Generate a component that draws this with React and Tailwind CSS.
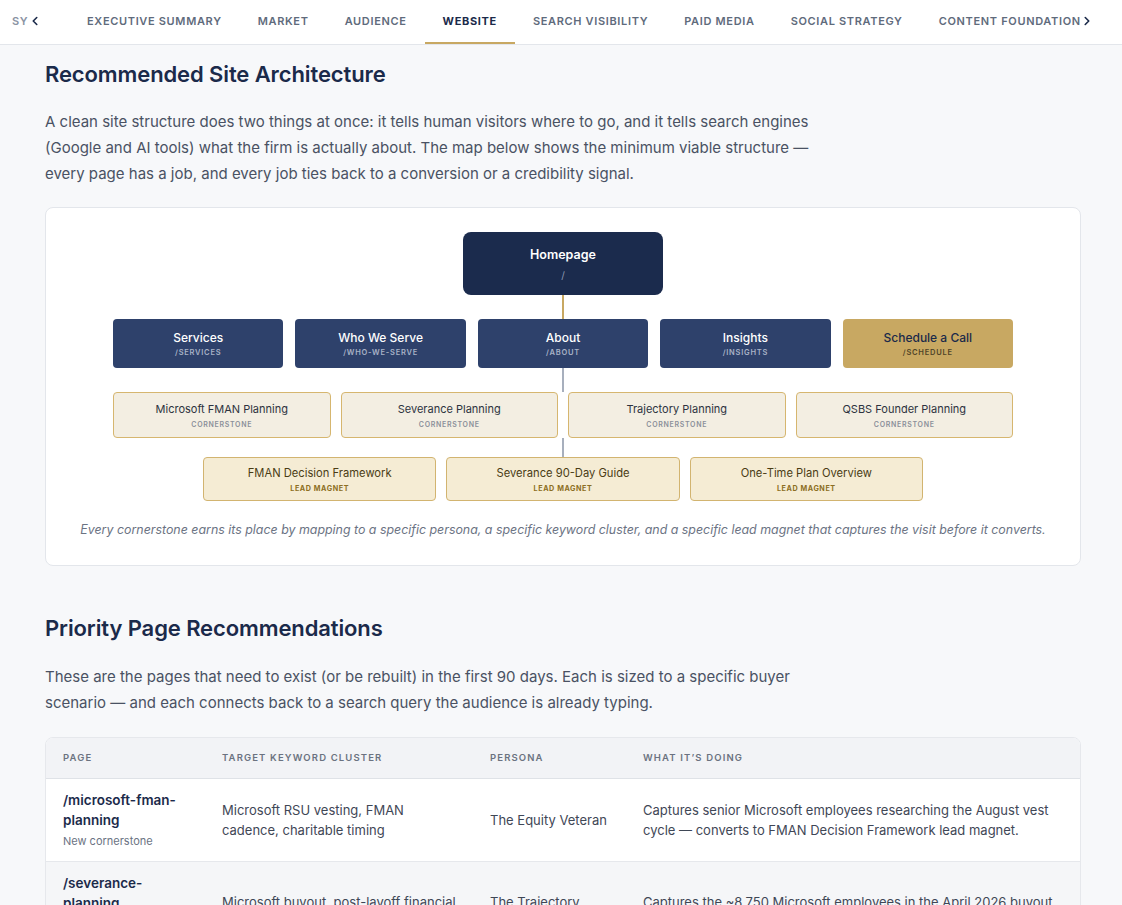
import React from "react";
import { ChevronLeft, ChevronRight } from "lucide-react";

const tabs = [
  "EXECUTIVE SUMMARY",
  "MARKET",
  "AUDIENCE",
  "WEBSITE",
  "SEARCH VISIBILITY",
  "PAID MEDIA",
  "SOCIAL STRATEGY",
  "CONTENT FOUNDATION",
];

const mainNav = [
  { t: "Services", s: "/SERVICES" },
  { t: "Who We Serve", s: "/WHO-WE-SERVE" },
  { t: "About", s: "/ABOUT" },
  { t: "Insights", s: "/INSIGHTS" },
];

const cornerstones = [
  "Microsoft FMAN Planning",
  "Severance Planning",
  "Trajectory Planning",
  "QSBS Founder Planning",
];

const magnets = [
  "FMAN Decision Framework",
  "Severance 90-Day Guide",
  "One-Time Plan Overview",
];

const rows = [
  {
    page: "/microsoft-fman-planning",
    note: "New cornerstone",
    kw: "Microsoft RSU vesting, FMAN cadence, charitable timing",
    persona: "The Equity Veteran",
    what: "Captures senior Microsoft employees researching the August vest cycle — converts to FMAN Decision Framework lead magnet.",
  },
  {
    page: "/severance-planning",
    note: "New cornerstone (time-sensitive)",
    kw: "Microsoft buyout, post-layoff financial planning, severance tax",
    persona: "The Trajectory Planner",
    what: "Captures the ~8,750 Microsoft employees in the April 2026 buyout window — converts to the Severance 90-Day Guide.",
  },
];

export default function App() {
  return (
    <div
      className="min-h-screen bg-[#f7f8fa] text-[#3f4756]"
      style={{ fontFamily: "Inter, 'Noto Sans', sans-serif" }}
    >
      {/* Tab bar */}
      <div className="relative h-[45px] bg-white border-b border-[#e3e6eb] overflow-hidden">
        <div className="flex h-full whitespace-nowrap pb-[2px]">
          <div className="-ml-[6px] w-[75px] shrink-0 h-full flex items-center pl-[18px] text-[11px] font-semibold tracking-[0.06em] text-[#8a93a3] overflow-hidden">
            SYSTEM
          </div>
          {tabs.map((t) => {
            const active = t === "WEBSITE";
            return (
              <div
                key={t}
                className={
                  "relative shrink-0 h-full flex items-center px-[18px] text-[11px] tracking-[0.06em] " +
                  (active
                    ? "font-bold text-[#1b2a4a]"
                    : "font-semibold text-[#5f6b7c]")
                }
              >
                {t}
                {active && (
                  <span className="absolute left-0 right-0 -bottom-[2px] h-[2px] bg-[#c8a862]" />
                )}
              </div>
            );
          })}
        </div>
        <div className="absolute left-[28px] top-0 h-full w-[40px] bg-white flex items-center pb-[2px]">
          <ChevronLeft size={14} strokeWidth={2.75} color="#1b2a4a" />
        </div>
        <div className="absolute left-[1080px] top-0 h-full w-[42px] bg-white flex items-center pb-[2px]">
          <ChevronRight size={14} strokeWidth={2.75} color="#1b2a4a" />
        </div>
      </div>

      <main className="ml-[45px] w-[1036px] pb-10">
        <h2 className="mt-[15px] text-[22px] leading-[28px] font-semibold tracking-[-0.005em] text-[#1b2a4a]">
          Recommended Site Architecture
        </h2>
        <p className="mt-[21px] max-w-[780px] text-[15px] leading-[26px] text-[#4a5263]">
          A clean site structure does two things at once: it tells human visitors where to go, and it tells search engines (Google and AI tools) what the firm is actually about. The map below shows the minimum viable structure — every page has a job, and every job ties back to a conversion or a credibility signal.
        </p>

        {/* Diagram card */}
        <div className="mt-[20px] bg-white border border-[#e3e6eb] rounded-lg pt-[24px] pb-[26px]">
          <div className="flex flex-col items-center">
            <div className="w-[200px] h-[63px] rounded-lg bg-[#1b2b4d] flex flex-col items-center justify-center gap-[6px]">
              <div className="text-[12.5px] leading-[16px] font-semibold text-white">Homepage</div>
              <div className="text-[10px] leading-[12px] text-[#8d99b3]">/</div>
            </div>
            <div className="w-[2px] h-[24px] bg-[#c8a862]" />
            <div className="w-[900px] grid grid-cols-5 gap-[12px]">
              {mainNav.map((n) => (
                <div
                  key={n.t}
                  className="h-[49px] rounded-[4px] bg-[#2e416b] flex flex-col items-center justify-center gap-[3px]"
                >
                  <div className="text-[12px] leading-[15px] font-medium text-white">{n.t}</div>
                  <div className="text-[7.5px] leading-[10px] font-semibold tracking-[0.1em] text-[#a9b3c7]">{n.s}</div>
                </div>
              ))}
              <div className="h-[49px] rounded-[4px] bg-[#c8a862] flex flex-col items-center justify-center gap-[3px]">
                <div className="text-[12px] leading-[15px] font-medium text-[#1b2a4a]">Schedule a Call</div>
                <div className="text-[7.5px] leading-[10px] font-semibold tracking-[0.1em] text-[#4f4428]">/SCHEDULE</div>
              </div>
            </div>
            <div className="w-[2px] h-[24px] bg-[#a7afbd]" />
            <div className="w-[900px] grid grid-cols-4 gap-[10px]">
              {cornerstones.map((c) => (
                <div
                  key={c}
                  className="h-[46px] rounded-[4px] bg-[#f3eee2] border border-[#d6b66f] flex flex-col items-center justify-center gap-[4px]"
                >
                  <div className="text-[11px] leading-[14px] text-[#2d3340]">{c}</div>
                  <div className="text-[7px] leading-[9px] font-semibold tracking-[0.1em] text-[#8b909a]">CORNERSTONE</div>
                </div>
              ))}
            </div>
            <div className="w-[2px] h-[19px] bg-[#a7afbd]" />
            <div className="w-[720px] grid grid-cols-3 gap-[10px]">
              {magnets.map((m) => (
                <div
                  key={m}
                  className="h-[44px] rounded-[4px] bg-[#f5ecd4] border border-[#d2b470] flex flex-col items-center justify-center gap-[4px]"
                >
                  <div className="text-[11.2px] leading-[14px] text-[#4a3c14]">{m}</div>
                  <div className="text-[7.2px] leading-[9px] font-bold tracking-[0.08em] text-[#8c6e22]">LEAD MAGNET</div>
                </div>
              ))}
            </div>
            <p className="mt-[20px] text-[12.4px] leading-[18px] italic text-[#6b7383]">
              Every cornerstone earns its place by mapping to a specific persona, a specific keyword cluster, and a specific lead magnet that captures the visit before it converts.
            </p>
          </div>
        </div>

        <h2 className="mt-[48px] text-[22px] leading-[28px] font-semibold tracking-[-0.005em] text-[#1b2a4a]">
          Priority Page Recommendations
        </h2>
        <p className="mt-[22px] max-w-[780px] text-[15px] leading-[26px] text-[#4a5263]">
          These are the pages that need to exist (or be rebuilt) in the first 90 days. Each is sized to a specific buyer scenario — and each connects back to a search query the audience is already typing.
        </p>

        {/* Table */}
        <div className="mt-[21px] rounded-lg border border-[#e6e8ec] overflow-hidden bg-white">
          <div className="grid grid-cols-[159px_268px_153px_1fr] h-[41px] items-center bg-[#f2f3f6] border-b border-[#dfe2e7] text-[9.5px] font-semibold tracking-[0.12em] text-[#6b7280]">
            <div className="px-[17px]">PAGE</div>
            <div className="px-[17px]">TARGET KEYWORD CLUSTER</div>
            <div className="px-[17px]">PERSONA</div>
            <div className="px-[17px]">WHAT IT’S DOING</div>
          </div>
          {rows.map((r, i) => (
            <div
              key={r.page}
              className={
                "grid grid-cols-[159px_268px_153px_1fr] items-center py-[11px] text-[13px] leading-[20px] text-[#3f4756] " +
                (i > 0 ? "border-t border-[#e6e8ec] bg-[#f5f6f8]" : "bg-white")
              }
            >
              <div className="px-[17px]">
                <div className="text-[13.5px] font-semibold text-[#1b2a4a] break-words">{r.page}</div>
                <div className="mt-[2px] text-[11px] leading-[18px] text-[#6b7383]">{r.note}</div>
              </div>
              <div className="px-[17px]">{r.kw}</div>
              <div className="px-[17px]">{r.persona}</div>
              <div className="px-[17px]">{r.what}</div>
            </div>
          ))}
        </div>
      </main>
    </div>
  );
}
